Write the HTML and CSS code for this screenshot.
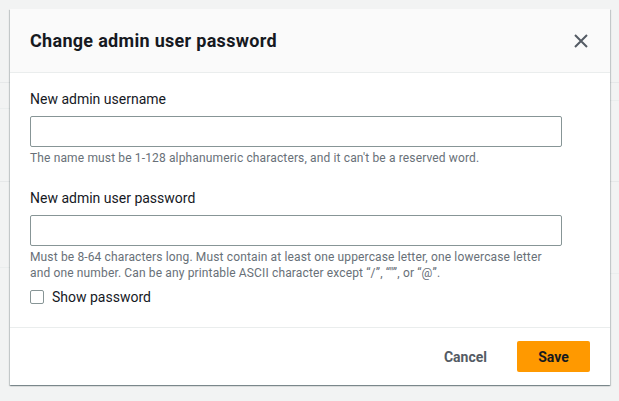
FILE: index.html
```html
<!DOCTYPE html>
<html lang="en">
<head>
<meta charset="utf-8">
<title>Change admin user password</title>
<link rel="stylesheet" href="styles.css">
</head>
<body>
<div class="modal" role="dialog" aria-labelledby="modal-title">
  <div class="modal-header">
    <h2 id="modal-title" class="modal-title">Change admin user password</h2>
    <button class="close-btn" type="button" aria-label="Close">
      <svg width="16" height="16" viewBox="0 0 16 16" aria-hidden="true">
        <path d="M2 2 L14 14 M14 2 L2 14" stroke="currentColor" stroke-width="2" fill="none"/>
      </svg>
    </button>
  </div>
  <div class="modal-body">
    <div class="field">
      <label class="field-label" for="username">New admin username</label>
      <input class="text-input" id="username" type="text">
      <div class="field-help">The name must be 1-128 alphanumeric characters, and it can't be a reserved word.</div>
    </div>
    <div class="field field-second">
      <label class="field-label" for="password">New admin user password</label>
      <input class="text-input" id="password" type="password">
      <div class="field-help">Must be 8-64 characters long. Must contain at least one uppercase letter, one lowercase letter<br>and one number. Can be any printable ASCII character except “/”, “"”, or “@”.</div>
    </div>
    <label class="checkbox">
      <span class="checkbox-box"></span>
      <span class="checkbox-label">Show password</span>
    </label>
  </div>
  <div class="modal-footer">
    <button class="btn btn-link" type="button">Cancel</button>
    <button class="btn btn-primary" type="button">Save</button>
  </div>
</div>
</body>
</html>
```

FILE: styles.css
```css
* { box-sizing: border-box; }

html, body {
  margin: 0;
  height: 100%;
}

body {
  font-family: Roboto, "Noto Sans", Arial, sans-serif;
  color: #16191f;
  background-color: #f2f3f3;
  background-image:
    linear-gradient(#e6e8e9, #e6e8e9),
    linear-gradient(#e6e8e9, #e6e8e9),
    linear-gradient(#eaeded, #eaeded),
    linear-gradient(#eaeded, #eaeded),
    linear-gradient(#eaeded, #eaeded),
    linear-gradient(#eaeded, #eaeded);
  background-repeat: no-repeat;
  background-size: 100% 1px, 100% 1px, 10px 1px, 10px 1px, 10px 1px, 10px 1px;
  background-position: 0 82px, 0 181px, 0 108px, 0 267px, 100% 100px, 100% 273px;
  padding: 9px 0 0 10px;
}

.modal {
  width: 600px;
  background: #ffffff;
  box-shadow: 0 1px 1px 0 rgba(0, 28, 36, 0.3), 1px 1px 1px 0 rgba(0, 28, 36, 0.15), -1px 1px 1px 0 rgba(0, 28, 36, 0.15);
}

.modal-header {
  height: 64px;
  background: #fafafa;
  border-bottom: 1px solid #eaeded;
  display: flex;
  align-items: center;
  justify-content: space-between;
  padding: 0 20px 0 20px;
}

.modal-title {
  margin: 0;
  font-size: 18px;
  font-weight: 700;
  line-height: 22px;
  letter-spacing: 0.3px;
  color: #16191f;
}

.close-btn {
  border: 0;
  background: none;
  padding: 0;
  margin-right: 1px;
  width: 16px;
  height: 16px;
  color: #545b64;
  display: flex;
}

.modal-body {
  padding: 15px 20px 19px;
}

.field {
  display: flex;
  flex-direction: column;
}

.field-second {
  margin-top: 21px;
}

.field-label {
  font-size: 14px;
  line-height: 22px;
  color: #16191f;
  margin-bottom: 6px;
}

.text-input {
  width: 532px;
  height: 31px;
  border: 1px solid #879596;
  border-radius: 2px;
  background: #fff;
  font: inherit;
  padding: 4px 10px;
  margin: 0;
}

.field-help {
  margin-top: 3px;
  font-size: 12px;
  line-height: 16px;
  letter-spacing: 0.14px;
  color: #687078;
}

.checkbox {
  margin-top: 5px;
  display: flex;
  align-items: center;
  gap: 8px;
  height: 22px;
}

.checkbox-box {
  width: 14px;
  height: 14px;
  border: 1px solid #879596;
  border-radius: 2px;
  background: #fff;
}

.checkbox-label {
  font-size: 14px;
  line-height: 22px;
  color: #16191f;
}

.modal-footer {
  border-top: 1px solid #eaeded;
  display: flex;
  justify-content: flex-end;
  align-items: center;
  gap: 10px;
  padding: 13px 20px 13px;
}

.btn {
  font: inherit;
  font-size: 14px;
  font-weight: 700;
  line-height: 22px;
  border: 0;
  border-radius: 2px;
  height: 31px;
  padding: 0 20px;
  cursor: pointer;
}

.btn-link {
  background: transparent;
  color: #545b64;
}

.btn-primary {
  background: #ff9900;
  color: #16191f;
  width: 73px;
}
```
